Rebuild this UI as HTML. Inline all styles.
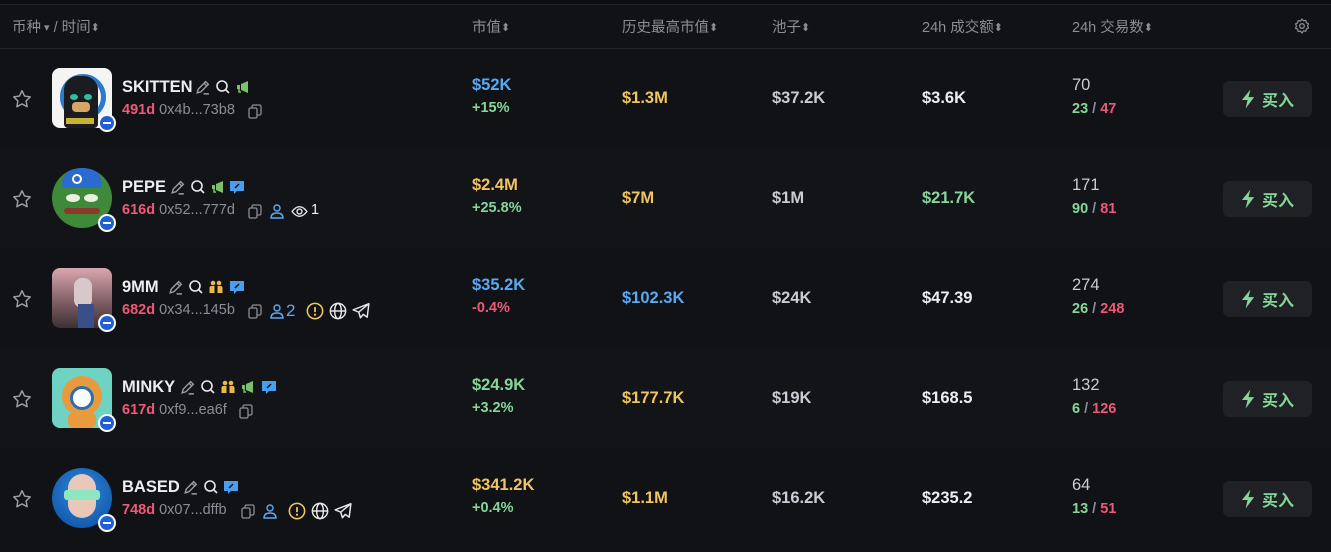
<!DOCTYPE html>
<html><head><meta charset="utf-8"><style>
*{margin:0;padding:0;box-sizing:border-box}
body{width:1331px;height:552px;background:#111215;font-family:"Liberation Sans","Noto Sans CJK SC",sans-serif;color:#e8e8ea;position:relative;overflow:hidden}
.top{position:absolute;left:0;top:0;width:1331px;height:5px;background:#0c0d0f;border-bottom:1px solid #25262a}
.hdr{position:absolute;top:16px;font-size:14.5px;color:#8b8e96;white-space:nowrap}
.ar{font-size:11px;position:relative;top:-1px}
.hline{position:absolute;left:0;top:48px;width:1331px;height:1px;background:#25262a}
.row{position:absolute;left:0;width:1331px;height:100px}
.row.alt{background:#131418}
.a{position:absolute;white-space:nowrap}
.big{font-size:16.5px;font-weight:bold}
.sm{font-size:14.5px;font-weight:bold}
.g{color:#86d69b}.r{color:#f0587a}.b{color:#5aa9f2}.y{color:#f0c462}.w{color:#eceef2}.gr{color:#8b8e96}.lt{color:#c9ccd4}
.av{position:absolute;left:52px;top:19px;width:60px;height:60px;border-radius:8px;overflow:hidden}
.badge{position:absolute;left:98px;top:65px;width:18px;height:18px;border-radius:50%;background:#fff;}
.badge:after{content:"";position:absolute;left:2px;top:2px;width:14px;height:14px;border-radius:50%;background:#1d5fd6}
.badge:before{content:"";position:absolute;left:5px;top:8px;width:8px;height:2px;background:#fff;z-index:2}
.btn{position:absolute;left:1223px;width:89px;height:36px;border-radius:6px;background:#1f2125;color:#86d69b;font-size:16px;font-weight:bold;display:flex;align-items:center;justify-content:center;gap:6px}
</style></head><body>
<svg width="0" height="0" style="position:absolute">
<defs>
<symbol id="star" viewBox="0 0 24 24"><path d="M12 3l2.8 5.8 6.2.9-4.5 4.4 1.1 6.3L12 17.4l-5.6 3 1.1-6.3L3 9.7l6.2-.9z" fill="none" stroke="#9a9da5" stroke-width="1.6" stroke-linejoin="round"/></symbol>
<symbol id="pen" viewBox="0 0 16 16"><path d="M3 13l1-3.5 7-7 2.5 2.5-7 7zM9.5 4l2.5 2.5M9 14h5" fill="none" stroke="#9a9da5" stroke-width="1.3"/></symbol>
<symbol id="srch" viewBox="0 0 16 16"><circle cx="7" cy="7" r="5" fill="none" stroke="#e8e8ea" stroke-width="1.6"/><path d="M11 11l3 3" stroke="#e8e8ea" stroke-width="1.6"/></symbol>
<symbol id="mega" viewBox="0 0 16 16"><path d="M2 6h3v4H2zM6 5l7-3v12l-7-3z" fill="#7cc06a"/><path d="M4 10v3h2" stroke="#7cc06a" stroke-width="1.5" fill="none"/></symbol>
<symbol id="chat" viewBox="0 0 16 16"><path d="M1 2h14v10H8l-3 3v-3H1z" fill="#4a9ef0"/><path d="M6 9l4-4" stroke="#111" stroke-width="1.5"/></symbol>
<symbol id="ppl" viewBox="0 0 16 16"><circle cx="5" cy="4" r="2.3" fill="#e8b84a"/><circle cx="11" cy="4" r="2.3" fill="#e8b84a"/><path d="M1.5 14V9q0-2 2-2h3v7zM9.5 14V7h3q2 0 2 2v5z" fill="#e8b84a"/></symbol>
<symbol id="copy" viewBox="0 0 16 16"><rect x="5" y="2" width="9" height="10" rx="1.5" fill="none" stroke="#8b8e96" stroke-width="1.3"/><rect x="2" y="5" width="8" height="10" rx="1.5" fill="#111215" stroke="#8b8e96" stroke-width="1.3"/></symbol>
<symbol id="user" viewBox="0 0 16 16"><circle cx="8" cy="5" r="3" fill="none" stroke="#5aa9f2" stroke-width="1.4"/><path d="M2 15q0-5 6-5t6 5z" fill="none" stroke="#5aa9f2" stroke-width="1.4"/></symbol>
<symbol id="eye" viewBox="0 0 16 16"><path d="M1 8q7-9 14 0-7 9-14 0z" fill="none" stroke="#e8e8ea" stroke-width="1.3"/><circle cx="8" cy="8" r="2.3" fill="none" stroke="#e8e8ea" stroke-width="1.3"/></symbol>
<symbol id="warn" viewBox="0 0 16 16"><circle cx="8" cy="8" r="6.8" fill="none" stroke="#f0c462" stroke-width="1.4"/><path d="M8 4.5v4.5" stroke="#f0c462" stroke-width="1.6"/><circle cx="8" cy="11.3" r="1" fill="#f0c462"/></symbol>
<symbol id="glob" viewBox="0 0 16 16"><circle cx="8" cy="8" r="6.8" fill="none" stroke="#e8e8ea" stroke-width="1.3"/><ellipse cx="8" cy="8" rx="3" ry="6.8" fill="none" stroke="#e8e8ea" stroke-width="1.3"/><path d="M1.2 8h13.6" stroke="#e8e8ea" stroke-width="1.3"/></symbol>
<symbol id="tg" viewBox="0 0 16 16"><path d="M15 1.5L1 7l5 2 1.5 5 2.5-3 3.5 2.5zM6 9l9-7.5" fill="none" stroke="#e8e8ea" stroke-width="1.3" stroke-linejoin="round"/></symbol>
<symbol id="bolt" viewBox="0 0 16 20"><path d="M10 0L1 11h6l-2 9 9-12H8z" fill="#86d69b"/></symbol>
</defs></svg>

<div class="top"></div>
<div class="hdr" style="left:12px">币种<span class="ar"> ▾</span> / 时间<span class="ar">⬍</span></div>
<div class="hdr" style="left:472px">市值<span class="ar">⬍</span></div>
<div class="hdr" style="left:622px">历史最高市值<span class="ar">⬍</span></div>
<div class="hdr" style="left:772px">池子<span class="ar">⬍</span></div>
<div class="hdr" style="left:922px">24h 成交额<span class="ar">⬍</span></div>
<div class="hdr" style="left:1072px">24h 交易数<span class="ar">⬍</span></div>
<svg class="a" style="left:1294px;top:18px" width="16" height="16" viewBox="0 0 16 16"><circle cx="8" cy="8" r="2.3" fill="none" stroke="#8b8e96" stroke-width="1.3"/><path d="M8 1l1.5 1.8 2.3-.4.6 2.3 2.1 1-1 2.1 1 2.2-2.2 1-.5 2.3-2.3-.4L8 15l-1.5-1.9-2.3.4-.6-2.3-2.1-1 1-2.2-1-2.1 2.1-1 .6-2.3 2.3.4z" fill="none" stroke="#8b8e96" stroke-width="1.2" stroke-linejoin="round"/></svg>
<div class="hline"></div>

<!-- Row 1 -->
<div class="row" style="top:49px">
<svg class="a" style="left:11px;top:39px" width="22" height="22"><use href="#star"/></svg>
<div class="av" style="background:#f4f4f2"><div style="position:absolute;left:8px;top:6px;width:46px;height:46px;border-radius:50%;border:5px solid #2a7bd0"></div><div style="position:absolute;left:12px;top:8px;width:34px;height:52px;background:#1a1c20;border-radius:14px 14px 4px 4px"></div><div style="position:absolute;left:18px;top:26px;width:8px;height:6px;background:#2fbf9a;border-radius:50%"></div><div style="position:absolute;left:32px;top:26px;width:8px;height:6px;background:#2fbf9a;border-radius:50%"></div><div style="position:absolute;left:20px;top:34px;width:18px;height:10px;background:#d8a566;border-radius:4px"></div><div style="position:absolute;left:14px;top:50px;width:28px;height:6px;background:#c9b236"></div></div>
<div class="badge"></div>
<div class="a big w" style="left:122px;top:29px">SKITTEN</div>
<svg class="a" style="left:194px;top:30px" width="17" height="17"><use href="#pen"/></svg>
<svg class="a" style="left:215px;top:30px" width="16" height="16"><use href="#srch"/></svg>
<svg class="a" style="left:235px;top:30px" width="16" height="16"><use href="#mega"/></svg>
<div class="a sm" style="left:122px;top:53px"><span class="r">491d</span> <span class="gr" style="font-weight:normal">0x4b...73b8</span></div>
<svg class="a" style="left:247px;top:54px" width="16" height="16"><use href="#copy"/></svg>
<div class="a big b" style="left:472px;top:27px">$52K</div>
<div class="a sm g" style="left:472px;top:51px">+15%</div>
<div class="a big y" style="left:622px;top:40px">$1.3M</div>
<div class="a big lt" style="left:772px;top:40px">$37.2K</div>
<div class="a big w" style="left:922px;top:40px">$3.6K</div>
<div class="a big lt" style="left:1072px;top:27px;font-weight:normal">70</div>
<div class="a sm" style="left:1072px;top:52px"><span class="g">23</span><span class="gr"> / </span><span class="r">47</span></div>
<div class="btn" style="top:32px"><svg width="15" height="20"><use href="#bolt"/></svg><span>买入</span></div>
</div>

<!-- Row 2 -->
<div class="row alt" style="top:149px">
<svg class="a" style="left:11px;top:39px" width="22" height="22"><use href="#star"/></svg>
<div class="av" style="border-radius:50%;background:#3f8a3a"><div style="position:absolute;left:10px;top:0;width:40px;height:20px;background:#2b6ad1;border-radius:18px 18px 4px 4px"></div><div style="position:absolute;left:20px;top:6px;width:10px;height:10px;border-radius:50%;border:2px solid #fff"></div><div style="position:absolute;left:14px;top:26px;width:14px;height:8px;background:#e9f0e0;border-radius:50%"></div><div style="position:absolute;left:32px;top:26px;width:14px;height:8px;background:#e9f0e0;border-radius:50%"></div><div style="position:absolute;left:12px;top:40px;width:36px;height:6px;background:#8a3a2a;border-radius:3px"></div></div>
<div class="badge"></div>
<div class="a big w" style="left:122px;top:29px">PEPE</div>
<svg class="a" style="left:169px;top:30px" width="17" height="17"><use href="#pen"/></svg>
<svg class="a" style="left:190px;top:30px" width="16" height="16"><use href="#srch"/></svg>
<svg class="a" style="left:210px;top:30px" width="16" height="16"><use href="#mega"/></svg>
<svg class="a" style="left:229px;top:30px" width="16" height="16"><use href="#chat"/></svg>
<div class="a sm" style="left:122px;top:53px"><span class="r">616d</span> <span class="gr" style="font-weight:normal">0x52...777d</span></div>
<svg class="a" style="left:247px;top:54px" width="16" height="16"><use href="#copy"/></svg>
<svg class="a" style="left:269px;top:54px" width="16" height="16"><use href="#user"/></svg>
<svg class="a" style="left:291px;top:54px" width="17" height="17"><use href="#eye"/></svg>
<div class="a sm w" style="left:311px;top:53px;font-weight:normal">1</div>
<div class="a big y" style="left:472px;top:27px">$2.4M</div>
<div class="a sm g" style="left:472px;top:51px">+25.8%</div>
<div class="a big y" style="left:622px;top:40px">$7M</div>
<div class="a big lt" style="left:772px;top:40px">$1M</div>
<div class="a big g" style="left:922px;top:40px">$21.7K</div>
<div class="a big lt" style="left:1072px;top:27px;font-weight:normal">171</div>
<div class="a sm" style="left:1072px;top:52px"><span class="g">90</span><span class="gr"> / </span><span class="r">81</span></div>
<div class="btn" style="top:32px"><svg width="15" height="20"><use href="#bolt"/></svg><span>买入</span></div>
</div>

<!-- Row 3 -->
<div class="row" style="top:249px">
<svg class="a" style="left:11px;top:39px" width="22" height="22"><use href="#star"/></svg>
<div class="av" style="background:linear-gradient(#d9a7ae,#7a5a60 60%,#3a3034)"><div style="position:absolute;left:22px;top:10px;width:18px;height:30px;background:#d8c8cc;border-radius:8px"></div><div style="position:absolute;left:26px;top:36px;width:16px;height:24px;background:#3a4e8a"></div></div>
<div class="badge"></div>
<div class="a big w" style="left:122px;top:29px">9MM</div>
<svg class="a" style="left:167px;top:30px" width="17" height="17"><use href="#pen"/></svg>
<svg class="a" style="left:188px;top:30px" width="16" height="16"><use href="#srch"/></svg>
<svg class="a" style="left:208px;top:30px" width="16" height="16"><use href="#ppl"/></svg>
<svg class="a" style="left:229px;top:30px" width="16" height="16"><use href="#chat"/></svg>
<div class="a sm" style="left:122px;top:53px"><span class="r">682d</span> <span class="gr" style="font-weight:normal">0x34...145b</span></div>
<svg class="a" style="left:247px;top:54px" width="16" height="16"><use href="#copy"/></svg>
<svg class="a" style="left:269px;top:54px" width="16" height="16"><use href="#user"/></svg>
<div class="a b" style="left:286px;top:52px;font-size:17px">2</div>
<svg class="a" style="left:306px;top:53px" width="18" height="18"><use href="#warn"/></svg>
<svg class="a" style="left:329px;top:53px" width="18" height="18"><use href="#glob"/></svg>
<svg class="a" style="left:352px;top:53px" width="18" height="18"><use href="#tg"/></svg>
<div class="a big b" style="left:472px;top:27px">$35.2K</div>
<div class="a sm r" style="left:472px;top:51px">-0.4%</div>
<div class="a big b" style="left:622px;top:40px">$102.3K</div>
<div class="a big lt" style="left:772px;top:40px">$24K</div>
<div class="a big w" style="left:922px;top:40px">$47.39</div>
<div class="a big lt" style="left:1072px;top:27px;font-weight:normal">274</div>
<div class="a sm" style="left:1072px;top:52px"><span class="g">26</span><span class="gr"> / </span><span class="r">248</span></div>
<div class="btn" style="top:32px"><svg width="15" height="20"><use href="#bolt"/></svg><span>买入</span></div>
</div>

<!-- Row 4 -->
<div class="row alt" style="top:349px">
<svg class="a" style="left:11px;top:39px" width="22" height="22"><use href="#star"/></svg>
<div class="av" style="background:#6fd3c4"><div style="position:absolute;left:10px;top:8px;width:40px;height:40px;background:#e79a3e;border-radius:50%"></div><div style="position:absolute;left:18px;top:18px;width:24px;height:24px;background:#fff;border-radius:50%;border:3px solid #2a6fb0"></div><div style="position:absolute;left:16px;top:44px;width:28px;height:16px;background:#e79a3e;border-radius:6px"></div></div>
<div class="badge"></div>
<div class="a big w" style="left:122px;top:29px">MINKY</div>
<svg class="a" style="left:179px;top:30px" width="17" height="17"><use href="#pen"/></svg>
<svg class="a" style="left:200px;top:30px" width="16" height="16"><use href="#srch"/></svg>
<svg class="a" style="left:220px;top:30px" width="16" height="16"><use href="#ppl"/></svg>
<svg class="a" style="left:240px;top:30px" width="16" height="16"><use href="#mega"/></svg>
<svg class="a" style="left:261px;top:30px" width="16" height="16"><use href="#chat"/></svg>
<div class="a sm" style="left:122px;top:53px"><span class="r">617d</span> <span class="gr" style="font-weight:normal">0xf9...ea6f</span></div>
<svg class="a" style="left:238px;top:54px" width="16" height="16"><use href="#copy"/></svg>
<div class="a big g" style="left:472px;top:27px">$24.9K</div>
<div class="a sm g" style="left:472px;top:51px">+3.2%</div>
<div class="a big y" style="left:622px;top:40px">$177.7K</div>
<div class="a big lt" style="left:772px;top:40px">$19K</div>
<div class="a big w" style="left:922px;top:40px">$168.5</div>
<div class="a big lt" style="left:1072px;top:27px;font-weight:normal">132</div>
<div class="a sm" style="left:1072px;top:52px"><span class="g">6</span><span class="gr"> / </span><span class="r">126</span></div>
<div class="btn" style="top:32px"><svg width="15" height="20"><use href="#bolt"/></svg><span>买入</span></div>
</div>

<!-- Row 5 -->
<div class="row" style="top:449px">
<svg class="a" style="left:11px;top:39px" width="22" height="22"><use href="#star"/></svg>
<div class="av" style="border-radius:50%;background:radial-gradient(circle at 50% 40%,#2d8be0,#0d4a9a)"><div style="position:absolute;left:16px;top:6px;width:28px;height:44px;background:#e8c8b8;border-radius:14px"></div><div style="position:absolute;left:12px;top:22px;width:36px;height:10px;background:#8ee6c0;border-radius:3px"></div></div>
<div class="badge"></div>
<div class="a big w" style="left:122px;top:29px">BASED</div>
<svg class="a" style="left:182px;top:30px" width="17" height="17"><use href="#pen"/></svg>
<svg class="a" style="left:203px;top:30px" width="16" height="16"><use href="#srch"/></svg>
<svg class="a" style="left:223px;top:30px" width="16" height="16"><use href="#chat"/></svg>
<div class="a sm" style="left:122px;top:53px"><span class="r">748d</span> <span class="gr" style="font-weight:normal">0x07...dffb</span></div>
<svg class="a" style="left:240px;top:54px" width="16" height="16"><use href="#copy"/></svg>
<svg class="a" style="left:262px;top:54px" width="16" height="16"><use href="#user"/></svg>
<svg class="a" style="left:288px;top:53px" width="18" height="18"><use href="#warn"/></svg>
<svg class="a" style="left:311px;top:53px" width="18" height="18"><use href="#glob"/></svg>
<svg class="a" style="left:334px;top:53px" width="18" height="18"><use href="#tg"/></svg>
<div class="a big y" style="left:472px;top:27px">$341.2K</div>
<div class="a sm g" style="left:472px;top:51px">+0.4%</div>
<div class="a big y" style="left:622px;top:40px">$1.1M</div>
<div class="a big lt" style="left:772px;top:40px">$16.2K</div>
<div class="a big w" style="left:922px;top:40px">$235.2</div>
<div class="a big lt" style="left:1072px;top:27px;font-weight:normal">64</div>
<div class="a sm" style="left:1072px;top:52px"><span class="g">13</span><span class="gr"> / </span><span class="r">51</span></div>
<div class="btn" style="top:32px"><svg width="15" height="20"><use href="#bolt"/></svg><span>买入</span></div>
</div>
</body></html>
